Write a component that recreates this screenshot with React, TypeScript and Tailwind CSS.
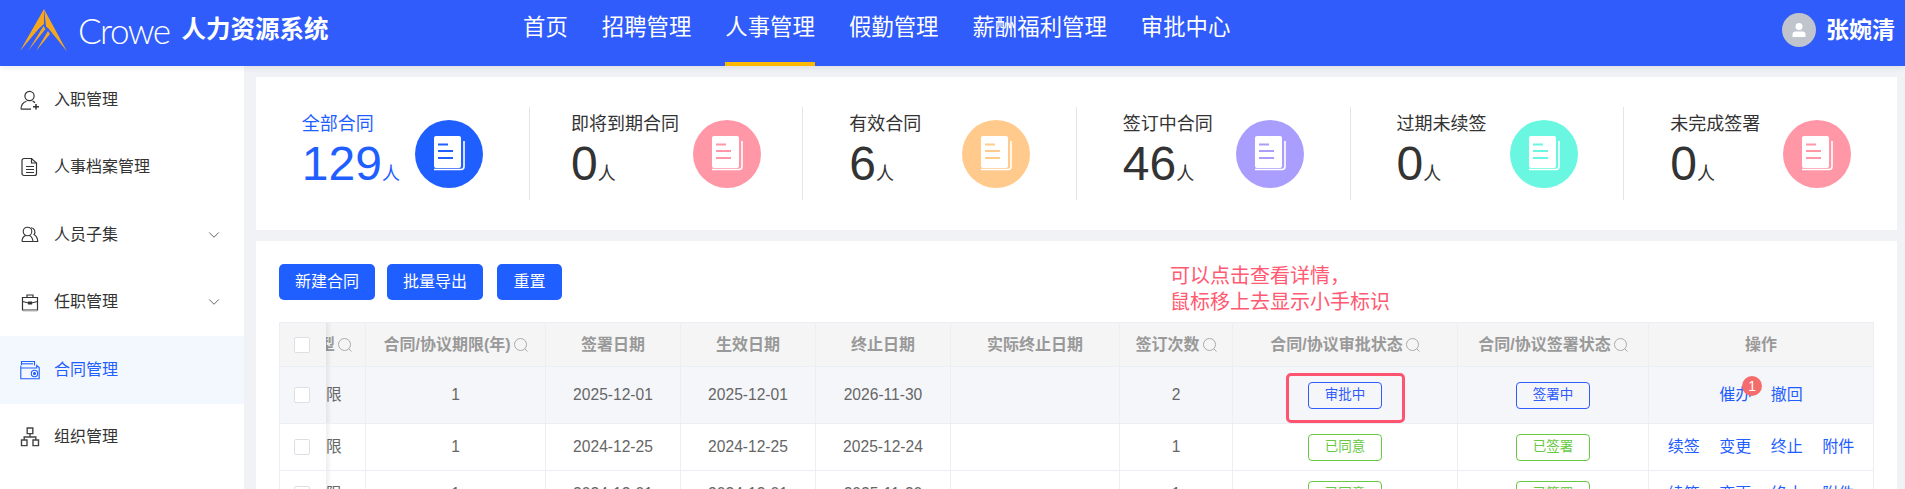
import React from 'react'
import { ChevronDown } from 'lucide-react'

const FONT = 'font-["Liberation_Sans","Noto_Sans_CJK_SC",sans-serif]'

const navItems = ['首页', '招聘管理', '人事管理', '假勤管理', '薪酬福利管理', '审批中心']

const UserAddIcon = () => (
  <svg width="20" height="20" viewBox="0 0 20 20" fill="none" stroke="currentColor" strokeWidth="1.2">
    <circle cx="9.5" cy="6" r="4.6" />
    <path d="M1 19.2c0-4.2 2.4-7 5.500-8M12.500 11c1 .4 1.800 1 2.400 1.800M1 19.200h10" />
    <path d="M13 16.800h6M16 14v5.600" strokeWidth="1.500" />
  </svg>
)

const FileIcon = () => (
  <svg width="20" height="20" viewBox="0 0 20 20" fill="none" stroke="currentColor" strokeWidth="1.2">
    <path d="M4.500 1.500h7.500l5 4.500v10.500a2 2 0 0 1-2 2h-10.500a2 2 0 0 1-2-2v-13a2 2 0 0 1 2-2z" transform="translate(-.5 0)" />
    <path d="M11.500 1.500v4.500h5M6 9.500h8M6 12.500h8M6 15.500h8" />
  </svg>
)

const UsersIcon = () => (
  <svg width="20" height="20" viewBox="0 0 20 20" fill="none" stroke="currentColor" strokeWidth="1.1">
    <circle cx="7.500" cy="6.500" r="4.300" />
    <path d="M2 16.500c0-3 1.500-5 3.500-6M9.500 10.500c2 1 3.200 3 3.500 6H2" />
    <path d="M11 2.800a4.200 4.200 0 0 1 3 6.800c2 1 3.500 3.500 3.800 6.900h-4.500" />
  </svg>
)

const CaseIcon = () => (
  <svg width="20" height="20" viewBox="0 0 20 20" fill="none" stroke="currentColor" strokeWidth="1.200">
    <path d="M2.500 5.500h15v12.500h-15z" />
    <path d="M7 5.500V3h6v2.500M2.500 9.500l6 1.500M17.500 9.500l-6 1.500" />
    <path d="M8.500 10h3v2h-3z" fill="currentColor" />
    <path d="M3 18.800h14.500" stroke="#aaa" />
  </svg>
)

const FolderIcon = () => (
  <svg width="20" height="20" viewBox="0 0 20 20" fill="none" stroke="currentColor" strokeWidth="1.100">
    <path d="M.8 5.500v13.300h18.400V7.500l-2.500-2v2.500H.8" />
    <path d="M1.500 5V1.500h13v4" />
    <path d="M2 3.800h11" />
    <circle cx="14.500" cy="13.500" r="3.200" />
    <circle cx="14.500" cy="13.500" r="1" fill="currentColor" />
  </svg>
)

const OrgIcon = () => (
  <svg width="20" height="20" viewBox="0 0 20 20" fill="none" stroke="#444" strokeWidth="1.400">
    <path d="M7.200 1h5.600v5.600H7.200zM1.500 13h5.500v5.600H1.500zM13 13h5.500v5.600H13z" />
    <path d="M10 6.600V10M4.200 13v-3h11.600v3" />
  </svg>
)

const menuItems = [
  { label: '入职管理', icon: <UserAddIcon /> },
  { label: '人事档案管理', icon: <FileIcon /> },
  { label: '人员子集', icon: <UsersIcon />, arrow: true },
  { label: '任职管理', icon: <CaseIcon />, arrow: true },
  { label: '合同管理', icon: <FolderIcon />, active: true },
  { label: '组织管理', icon: <OrgIcon /> },
]

// 统计卡片
const stats = [
  { label: '全部合同', value: '129', color: '#1f5eff', active: true },
  { label: '即将到期合同', value: '0', color: '#ff97a7' },
  { label: '有效合同', value: '6', color: '#ffca8c' },
  { label: '签订中合同', value: '46', color: '#a99efd' },
  { label: '过期未续签', value: '0', color: '#69f7e2' },
  { label: '未完成签署', value: '0', color: '#ff97a7' },
]

const BookCircle = ({ color }: { color: string }) => (
  <svg width="68" height="68" viewBox="0 0 68 68" className="shrink-0">
    <circle cx="34" cy="34" r="34" fill={color} />
    <rect x="19" y="16" width="27" height="32" rx="2" fill="#fff" />
    <path d="M49 21v25.500a3 3 0 0 1-3 3H19" fill="none" stroke="#fff" strokeWidth="1.600" />
    <path d="M23 24.500h10M23 31h15M23 38h15" stroke={color} strokeWidth="1.800" />
  </svg>
)

const Logo = () => (
  <svg width="48" height="43" viewBox="0 0 48 43" className="shrink-0">
    <path d="M24 0L47 42.500 28.500 19.500 26 17.500Z" fill="#f5a81f" />
    <path d="M24 0L0 42 18.500 20 24 15Z" fill="#f5a81f" />
    <path d="M23.500 17L8 42 25.500 20Z" fill="#f5a81f" />
    <path d="M28 22L16 42 30 25Z" fill="#f5a81f" />
  </svg>
)

type Row = {
  id: number
  term: string
  sign: string
  start: string
  end: string
  times: number
  approve: string
  signState: string
  ops: string[]
  current?: boolean
}

const rows: Row[] = [
  { id: 1, term: '1', sign: '2025-12-01', start: '2025-12-01', end: '2026-11-30', times: 2, approve: '审批中', signState: '签署中', ops: ['催办', '撤回'], current: true },
  { id: 2, term: '1', sign: '2024-12-25', start: '2024-12-25', end: '2025-12-24', times: 1, approve: '已同意', signState: '已签署', ops: ['续签', '变更', '终止', '附件'] },
  { id: 3, term: '1', sign: '2024-12-01', start: '2024-12-01', end: '2025-11-30', times: 1, approve: '已同意', signState: '已签署', ops: ['续签', '变更', '终止', '附件'] },
]

const SearchMark = () => (
  <svg width="14" height="14" viewBox="0 0 14 14" fill="none" stroke="#aaaaaa" strokeWidth="1" className="inline-block ml-[3px] align-[-2px]">
    <circle cx="6.500" cy="6.500" r="6" />
    <path d="M10.800 10.800l2.700 2.700" />
  </svg>
)

const Check = () => <span className="block w-4 h-4 bg-white border border-[#dcdfe6] rounded-[2px]" />

const Tag = ({ text, green }: { text: string; green: boolean }) => (
  <span
    className={`inline-flex items-center justify-center w-[74px] h-[27px] border rounded-[4px] text-[13.500px] ${
      green ? 'border-[#67c93f] text-[#67c93f]' : 'border-[#2f5cfb] text-[#2f5cfb]'
    }`}
  >
    {text}
  </span>
)

const thClass = 'border-r border-b border-[#ebeef5] font-bold text-[#999999] text-base text-center p-0 bg-[#f5f5f5]'
const tdClass = 'border-r border-b border-[#ebeef5] text-[#666666] text-[15.600px] text-center p-0'

const FixedShadow = () => (
  <span className="absolute top-0 bottom-0 left-full w-[6px] bg-gradient-to-r from-[rgba(0,0,0,0.07)] to-transparent" />
)

export default function App() {
  return (
    <div className={`${FONT} h-screen overflow-hidden flex flex-col bg-[#f1f2f5]`}>
      {/* 顶部导航 */}
      <header className="relative z-10 h-[66px] shrink-0 bg-[#2f5cfb] flex items-center shadow-[0_2px_6px_rgba(0,0,0,0.08)]">
        <div className="pl-5 pb-[6px] flex items-center w-[523px] shrink-0">
          <Logo />
          <span className="ml-[10px] font-['Lato',sans-serif] font-light text-[35px] tracking-[-1.500px] text-white leading-none">Crowe</span>
          <span className="ml-[12px] text-[24.500px] font-bold text-white">人力资源系统</span>
        </div>
        <nav className="flex gap-[34px] h-full">
          {navItems.map((item) => (
            <a
              key={item}
              className={`h-full flex items-center pb-[7px] text-[22.400px] text-white border-b-4 ${
                item === '人事管理' ? 'border-[#ffb800]' : 'border-transparent'
              }`}
            >
              {item}
            </a>
          ))}
        </nav>
        <div className="ml-auto pr-[10px] flex items-center gap-[10px] pb-[6px]">
          <span className="w-[34px] h-[34px] rounded-full bg-[#c0c4cc] flex items-center justify-center">
            <svg width="16" height="16" viewBox="0 0 16 16" fill="#fff">
              <circle cx="8" cy="4.500" r="3.500" />
              <path d="M1.500 15v-2.500a3 3 0 0 1 3-3h7a3 3 0 0 1 3 3V15z" />
            </svg>
          </span>
          <span className="text-[23px] font-bold text-white">张婉清</span>
        </div>
      </header>

      <div className="flex flex-1 min-h-0">
        {/* 侧边菜单 */}
        <aside className="w-[244px] shrink-0 bg-white">
          {menuItems.map((m) => (
            <div
              key={m.label}
              className={`h-[67.500px] flex items-center pl-5 pr-[21px] text-base ${
                m.active ? 'bg-[#f3f8fe] text-[#1f5eff]' : 'text-[#333333]'
              }`}
            >
              <span className="w-5 h-5 shrink-0">{m.icon}</span>
              <span className="ml-[14px] flex-1">{m.label}</span>
              {m.arrow && <ChevronDown className="w-[18px] h-[18px] text-[#555555]" strokeWidth={1.200} />}
            </div>
          ))}
        </aside>

        <main className="flex-1 min-w-0 pt-[11px] pl-3 pr-2 flex flex-col gap-[11px]">
          {/* 合同统计 */}
          <section className="h-[153px] shrink-0 bg-white flex items-center">
            {stats.map((s, i) => (
              <div
                key={s.label}
                className={`flex-1 h-[93px] flex items-center justify-center ${i < 5 ? 'border-r border-[#e5e5e5]' : ''}`}
              >
                <div className={`min-w-[113px] pr-[14px] pt-[3px] ${s.active ? 'text-[#1f5eff]' : 'text-[#333333]'}`}>
                  <div className="text-lg leading-[30px] whitespace-nowrap mb-px">{s.label}</div>
                  <div className="whitespace-nowrap leading-[54px]">
                    <span className="text-5xl">{s.value}</span>
                    <span className="text-lg">人</span>
                  </div>
                </div>
                <BookCircle color={s.color} />
              </div>
            ))}
          </section>

          {/* 合同列表 */}
          <section className="relative flex-1 bg-white pl-[23px] pr-[23px] pt-[23px]">
            <div className="flex gap-3">
              <button className="w-24 h-9 bg-[#1f5eff] text-white text-base rounded-[5px]">新建合同</button>
              <button className="w-24 h-9 bg-[#1f5eff] text-white text-base rounded-[5px]">批量导出</button>
              <button className="w-[65px] h-9 ml-[2px] bg-[#1f5eff] text-white text-base rounded-[5px]">重置</button>
            </div>

            <div className="absolute left-[914px] top-[22px] text-xl leading-[26px] text-[#ff5a72]">
              可以点击查看详情，
              <br />
              鼠标移上去显示小手标识
            </div>

            <table className="mt-[22px] table-fixed border-separate border-spacing-0 border-l border-t border-[#ebeef5] w-[1595px]">
              <colgroup>
                <col className="w-[46px]" />
                <col className="w-[40px]" />
                <col className="w-[180px]" />
                <col className="w-[135px]" />
                <col className="w-[135px]" />
                <col className="w-[135px]" />
                <col className="w-[169px]" />
                <col className="w-[113px]" />
                <col className="w-[225px]" />
                <col className="w-[191px]" />
                <col className="w-[225px]" />
              </colgroup>
              <thead>
                <tr className="h-[44px]">
                  <th className="relative z-[1] border-b border-[#ebeef5] bg-[#f5f5f5] p-0">
                    <span className="flex justify-center pr-[2px]"><Check /></span>
                    <FixedShadow />
                  </th>
                  <th className={`${thClass} text-left overflow-hidden whitespace-nowrap`}>
                    <span className="ml-[-7px]">型</span>
                    <SearchMark />
                  </th>
                  <th className={thClass}>合同/协议期限(年)<SearchMark /></th>
                  <th className={thClass}>签署日期</th>
                  <th className={thClass}>生效日期</th>
                  <th className={thClass}>终止日期</th>
                  <th className={thClass}>实际终止日期</th>
                  <th className={thClass}>签订次数<SearchMark /></th>
                  <th className={thClass}>合同/协议审批状态<SearchMark /></th>
                  <th className={thClass}>合同/协议签署状态<SearchMark /></th>
                  <th className={thClass}>操作</th>
                </tr>
              </thead>
              <tbody>
                {rows.map((row) => (
                  <tr key={row.id} className={row.current ? 'h-[57px] bg-[#f5f6fa]' : 'h-[47px] bg-white'}>
                    <td className={`relative z-[1] border-b border-[#ebeef5] p-0 ${row.current ? 'bg-[#f5f6fa]' : 'bg-white'}`}>
                      <span className="flex justify-center pr-[2px]"><Check /></span>
                      <FixedShadow />
                    </td>
                    <td className={`${tdClass} text-left text-base`}>限</td>
                    <td className={tdClass}>{row.term}</td>
                    <td className={tdClass}>{row.sign}</td>
                    <td className={tdClass}>{row.start}</td>
                    <td className={tdClass}>{row.end}</td>
                    <td className={tdClass}></td>
                    <td className={tdClass}>{row.times}</td>
                    <td className={`${tdClass} relative`}>
                      <Tag text={row.approve} green={!row.current} />
                      {row.current && (
                        <span className="absolute left-[53px] top-[6px] w-[119px] h-[50px] border-[3px] border-[#ff5470] rounded-[5px]" />
                      )}
                    </td>
                    <td className={tdClass}>
                      <Tag text={row.signState} green={!row.current} />
                    </td>
                    <td className={tdClass}>
                      <div className="flex justify-center gap-[19.500px] text-base text-[#1f5eff]">
                        {row.ops.map((op) => (
                          <a key={op} className="relative">
                            {op}
                            {op === '催办' && (
                              <span className="absolute left-[23px] top-[-7px] w-5 h-5 rounded-full bg-[#f56c6c] text-white text-sm leading-5 text-center">1</span>
                            )}
                          </a>
                        ))}
                      </div>
                    </td>
                  </tr>
                ))}
              </tbody>
            </table>
          </section>
        </main>
      </div>
    </div>
  )
}
